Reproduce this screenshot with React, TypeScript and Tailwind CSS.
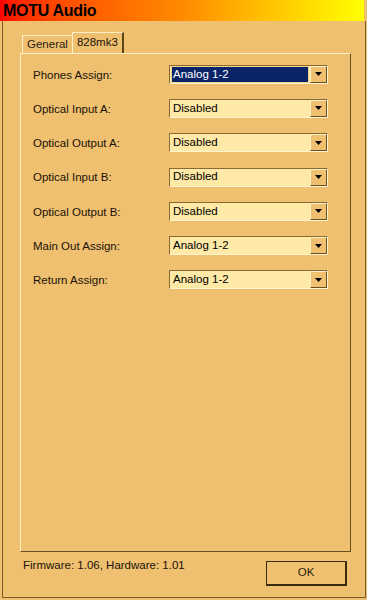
import React from 'react';

const rows = [
  { label: 'Phones Assign:', value: 'Analog 1-2', selected: true },
  { label: 'Optical Input A:', value: 'Disabled' },
  { label: 'Optical Output A:', value: 'Disabled' },
  { label: 'Optical Input B:', value: 'Disabled' },
  { label: 'Optical Output B:', value: 'Disabled' },
  { label: 'Main Out Assign:', value: 'Analog 1-2' },
  { label: 'Return Assign:', value: 'Analog 1-2' },
];

function Dropdown({ value, selected }: { value: string; selected?: boolean }) {
  return (
    <div className="flex w-[159px] h-[19px] border-t border-l border-t-[#8a6a30] border-l-[#8a6a30] border-b border-r border-b-[#fff3d0] border-r-[#fff3d0] bg-[#ffe9a6]">
      <div className="flex-1 flex items-center pl-[2px] pr-[2px]">
        {selected ? (
          <span className="flex-1 h-[15px] flex items-center pl-[1px] bg-[#0a246a] text-white outline outline-1 outline-dotted outline-[#f0c070]">
            {value}
          </span>
        ) : (
          <span className="text-black pl-[1px]">{value}</span>
        )}
      </div>
      <div className="w-[17px] h-[17px] flex items-center justify-center bg-[#efc070] border-t border-l border-t-[#fff0c8] border-l-[#fff0c8] border-b border-r border-b-[#6a5020] border-r-[#6a5020]">
        <svg width="7" height="4" viewBox="0 0 7 4">
          <path d="M0 0h7L3.5 4z" fill="#000" />
        </svg>
      </div>
    </div>
  );
}

export default function App() {
  return (
    <div
      className="w-[367px] h-[600px] bg-[#efc070] flex flex-col text-[11.5px] text-[#1a1208]"
      style={{ fontFamily: 'Tahoma, "Liberation Sans", Arial, sans-serif' }}
    >
      {/* title bar */}
      <div className="h-[21px] w-[364px] flex items-center pl-[3px] bg-gradient-to-r from-[#ff0000] via-[#ff8a00] to-[#ffff00]">
        <span className="font-bold text-[16px] text-black tracking-[-0.3px]">MOTU Audio</span>
      </div>

      {/* window body */}
      <div className="w-[364px] h-[577px] ml-[2px] border-l border-r border-b border-[#7a5c28] flex flex-col pl-[17px] pr-[13px] pt-[11px]">
        {/* tabs */}
        <div className="flex items-end h-[21px] pl-[2px]">
          <div className="h-[18px] px-[4px] flex items-center border-t border-l border-[#fff0c8] text-[#2a2010]">General</div>
          <div className="h-[21px] px-[4px] flex items-center border-t border-l border-t-[#fff0c8] border-l-[#fff0c8] border-r-2 border-r-[#5a4418] text-[#1a1208]">
            828mk3
          </div>
        </div>

        {/* panel */}
        <div className="w-[331px] h-[499px] border-t border-l border-t-[#fff0c8] border-l-[#fff0c8] border-b border-r border-b-[#6a5020] border-r-[#6a5020] flex flex-col pt-[3px] pl-[12px]">
          {rows.map((r) => (
            <div key={r.label} className="h-[34.3px] flex items-center shrink-0">
              <div className="w-[136px] pt-[2px]">{r.label}</div>
              <Dropdown value={r.value} selected={r.selected} />
            </div>
          ))}
        </div>

        {/* footer */}
        <div className="flex items-start mt-[9px] pl-[3px]">
          <div className="flex-1 -mt-[4px]">Firmware: 1.06, Hardware: 1.01</div>
          <div className="w-[81px] h-[25px] mr-[5px] flex items-center justify-center border border-[#3a2a10] border-b-2 border-r-2 text-[#2a2010]">
            OK
          </div>
        </div>
      </div>
    </div>
  );
}
